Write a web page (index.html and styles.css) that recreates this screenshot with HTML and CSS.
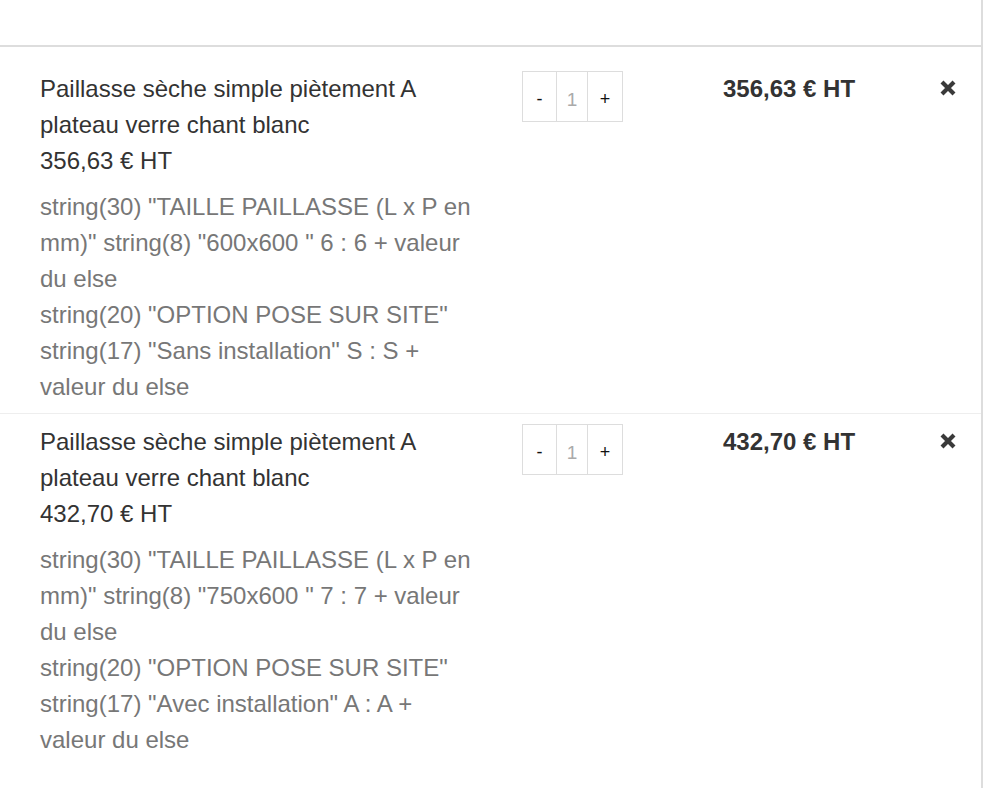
FILE: index.html
```html
<!DOCTYPE html>
<html lang="fr">
<head>
<meta charset="utf-8">
<title>Panier</title>
<link rel="stylesheet" href="styles.css">
</head>
<body>
<div class="cart">
  <div class="cart-head"></div>
  <div class="item item-first">
    <div class="info">
      <div class="name">Paillasse sèche simple piètement A plateau verre chant blanc</div>
      <div class="unit">356,63 € HT</div>
      <div class="opts">string(30) "TAILLE PAILLASSE (L x P en mm)" string(8) "600x600 " 6 : 6 + valeur du else<br>string(20) "OPTION POSE SUR SITE" string(17) "Sans installation" S : S + valeur du else</div>
    </div>
    <div class="qty-col">
      <div class="qty"><span class="btn">-</span><span class="val">1</span><span class="btn">+</span></div>
    </div>
    <div class="price">356,63 € HT</div>
    <div class="remove">
      <svg width="20" height="20" viewBox="0 0 20 20"><path d="M4 4 L16 16 M16 4 L4 16" stroke="#3a3a3a" stroke-width="4.2"/></svg>
    </div>
  </div>
  <div class="item item-next">
    <div class="info">
      <div class="name">Paillasse sèche simple piètement A plateau verre chant blanc</div>
      <div class="unit">432,70 € HT</div>
      <div class="opts">string(30) "TAILLE PAILLASSE (L x P en mm)" string(8) "750x600 " 7 : 7 + valeur du else<br>string(20) "OPTION POSE SUR SITE" string(17) "Avec installation" A : A + valeur du else</div>
    </div>
    <div class="qty-col">
      <div class="qty"><span class="btn">-</span><span class="val">1</span><span class="btn">+</span></div>
    </div>
    <div class="price">432,70 € HT</div>
    <div class="remove">
      <svg width="20" height="20" viewBox="0 0 20 20"><path d="M4 4 L16 16 M16 4 L4 16" stroke="#3a3a3a" stroke-width="4.2"/></svg>
    </div>
  </div>
</div>
</body>
</html>
```
FILE: styles.css
```css
html, body {
  margin: 0;
  padding: 0;
  background: #fff;
}
body {
  font-family: "Liberation Sans", Arial, sans-serif;
  color: #333;
  overflow: hidden;
}
.cart {
  width: 981px;
  min-height: 788px;
  border-right: 2px solid #ddd;
}
.cart-head {
  height: 45px;
  border-bottom: 2px solid #ddd;
}
.item {
  display: grid;
  grid-template-columns: 482px 200px 216px 40px;
  align-items: start;
  padding-left: 40px;
  padding-bottom: 8px;
}
.item-first {
  padding-top: 24px;
  border-bottom: 1px solid #eee;
}
.item-next {
  padding-top: 10px;
}
.info {
  width: 440px;
  font-size: 24px;
  line-height: 36px;
}
.name, .unit {
  color: #333;
}
.opts {
  margin-top: 10px;
  color: #777;
}
.qty {
  display: inline-flex;
  border: 1px solid #ddd;
  height: 49px;
}
.qty span {
  display: flex;
  align-items: center;
  justify-content: center;
  padding-top: 6px;
  box-sizing: border-box;
  font-size: 18px;
  color: #111;
}
.qty .btn:first-child {
  width: 34px;
  border-right: 1px solid #ddd;
}
.qty .val {
  width: 31px;
  color: #aaa;
  font-size: 19px;
  border-right: 1px solid #ddd;
}
.qty .btn:last-child {
  width: 34px;
}
.price {
  font-size: 24px;
  font-weight: bold;
  line-height: 36px;
  color: #333;
  padding-left: 1px;
}
.remove {
  padding-top: 7px;
}
```
